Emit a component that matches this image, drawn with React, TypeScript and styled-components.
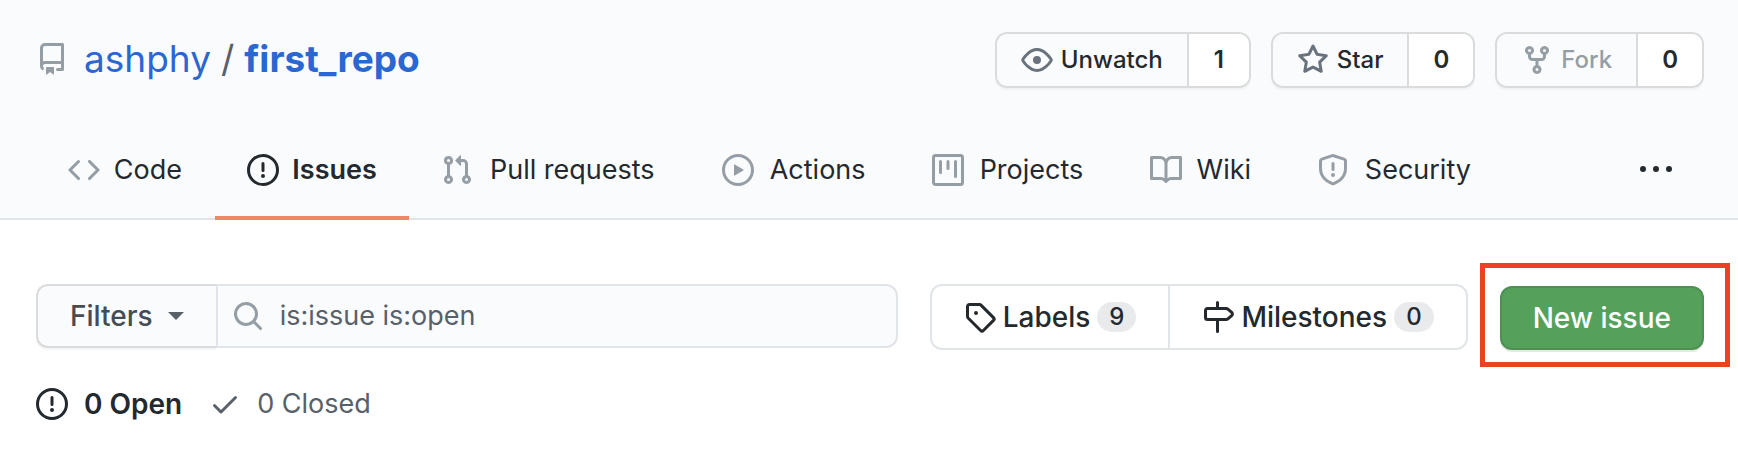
import React from 'react';
import styled, { createGlobalStyle, css } from 'styled-components';

const GlobalStyle = createGlobalStyle`
  *, *::before, *::after { box-sizing: border-box; }
  body {
    margin: 0;
    background: #ffffff;
    color: #24292e;
    font-family: Inter, "Liberation Sans", sans-serif;
    font-size: 27px;
    line-height: 40px;
  }
  a { color: inherit; text-decoration: none; }
  button, input { font: inherit; color: inherit; margin: 0; }
  button { cursor: pointer; }
`;

const icons = {
  repo: 'M2 2.5A2.5 2.5 0 014.5 0h8.75a.75.75 0 01.75.75v12.5a.75.75 0 01-.75.75h-2.5a.75.75 0 110-1.5h1.75v-2h-8a1 1 0 00-.714 1.7.75.75 0 01-1.072 1.05A2.495 2.495 0 012 11.5v-9zm10.5-1V9h-8c-.356 0-.694.074-1 .208V2.5a1 1 0 011-1h8zM5 12.25v3.25a.25.25 0 00.4.2l1.45-1.087a.25.25 0 01.3 0L8.6 15.7a.25.25 0 00.4-.2v-3.25a.25.25 0 00-.25-.25h-3.5a.25.25 0 00-.25.25z',
  code: 'M4.72 3.22a.75.75 0 011.06 1.06L2.06 8l3.72 3.72a.75.75 0 11-1.06 1.06L.47 8.53a.75.75 0 010-1.06l4.25-4.25zm6.56 0a.75.75 0 10-1.06 1.06L13.94 8l-3.72 3.72a.75.75 0 101.06 1.06l4.25-4.25a.75.75 0 000-1.06l-4.25-4.25z',
  issue: 'M8 1.5a6.5 6.5 0 100 13 6.5 6.5 0 000-13zM0 8a8 8 0 1116 0A8 8 0 010 8zm9 3a1 1 0 11-2 0 1 1 0 012 0zm-.25-6.25a.75.75 0 00-1.5 0v3.5a.75.75 0 001.5 0v-3.5z',
  pull: 'M7.177 3.073L9.573.677A.25.25 0 0110 .854v4.792a.25.25 0 01-.427.177L7.177 3.427a.25.25 0 010-.354zM3.75 2.5a.75.75 0 100 1.5.75.75 0 000-1.5zm-2.25.75a2.25 2.25 0 113 2.122v5.256a2.251 2.251 0 11-1.5 0V5.372A2.25 2.25 0 011.5 3.25zM11 2.5h-1V4h1a1 1 0 011 1v5.628a2.251 2.251 0 101.5 0V5A2.5 2.5 0 0011 2.5zm1 10.25a.75.75 0 111.5 0 .75.75 0 01-1.5 0zM3.75 12a.75.75 0 100 1.5.75.75 0 000-1.5z',
  play: 'M1.5 8a6.5 6.5 0 1113 0 6.5 6.5 0 01-13 0zM8 0a8 8 0 100 16A8 8 0 008 0zM6.379 5.227A.25.25 0 006 5.442v5.117a.25.25 0 00.379.214l4.264-2.559a.25.25 0 000-.428L6.379 5.227z',
  project: 'M1.75 0A1.75 1.75 0 000 1.75v12.5C0 15.216.784 16 1.75 16h12.5A1.75 1.75 0 0016 14.25V1.75A1.75 1.75 0 0014.25 0H1.75zM1.5 1.75a.25.25 0 01.25-.25h12.5a.25.25 0 01.25.25v12.5a.25.25 0 01-.25.25H1.75a.25.25 0 01-.25-.25V1.75zM11.75 3a.75.75 0 00-.75.75v7.5a.75.75 0 001.5 0v-7.5a.75.75 0 00-.75-.75zm-8.25.75a.75.75 0 011.5 0v5.5a.75.75 0 01-1.5 0v-5.5zM8 3a.75.75 0 00-.75.75v3.5a.75.75 0 001.5 0v-3.5A.75.75 0 008 3z',
  book: 'M0 1.75A.75.75 0 01.75 1h4.253c1.227 0 2.317.59 3 1.501A3.744 3.744 0 0111.006 1h4.245a.75.75 0 01.75.75v10.5a.75.75 0 01-.75.75h-4.507a2.25 2.25 0 00-1.591.659l-.622.621a.75.75 0 01-1.06 0l-.622-.621A2.25 2.25 0 005.258 13H.75a.75.75 0 01-.75-.75V1.75zm8.755 3a2.25 2.25 0 012.25-2.25H14.5v9h-3.757c-.71 0-1.4.201-1.992.572l.004-7.322zm-1.504 7.324l.004-5.073-.002-2.253A2.25 2.25 0 005.003 2.5H1.5v9h3.757a3.75 3.75 0 011.994.574z',
  shield: 'M7.467.133a1.75 1.75 0 011.066 0l5.25 1.68A1.75 1.75 0 0115 3.48V7c0 1.566-.32 3.182-1.303 4.682-.983 1.498-2.585 2.813-5.032 3.855a1.7 1.7 0 01-1.33 0c-2.447-1.042-4.049-2.357-5.032-3.855C1.32 10.182 1 8.566 1 7V3.48a1.75 1.75 0 011.217-1.667l5.25-1.68zm.61 1.429a.25.25 0 00-.153 0l-5.25 1.68a.25.25 0 00-.174.238V7c0 1.358.275 2.666 1.057 3.86.784 1.194 2.121 2.34 4.366 3.297a.2.2 0 00.154 0c2.245-.956 3.582-2.104 4.366-3.298C13.225 9.666 13.5 8.36 13.5 7V3.48a.25.25 0 00-.174-.237l-5.25-1.68zM9 10.5a1 1 0 11-2 0 1 1 0 012 0zm-.25-5.75a.75.75 0 10-1.5 0v3a.75.75 0 001.5 0v-3z',
  kebab: 'M8 9a1.5 1.5 0 100-3 1.5 1.5 0 000 3zM1.5 9a1.5 1.5 0 100-3 1.5 1.5 0 000 3zm13 0a1.5 1.5 0 100-3 1.5 1.5 0 000 3z',
  eye: 'M1.679 7.932c.412-.621 1.242-1.75 2.366-2.717C5.175 4.242 6.527 3.5 8 3.5c1.473 0 2.824.742 3.955 1.715 1.124.967 1.954 2.096 2.366 2.717a.119.119 0 010 .136c-.412.621-1.242 1.75-2.366 2.717C10.825 11.758 9.473 12.5 8 12.5c-1.473 0-2.824-.742-3.955-1.715C2.92 9.818 2.09 8.69 1.679 8.068a.119.119 0 010-.136zM8 2c-1.981 0-3.67.992-4.933 2.078C1.797 5.169.88 6.423.43 7.1a1.619 1.619 0 000 1.798c.45.678 1.367 1.932 2.637 3.024C4.329 13.008 6.019 14 8 14c1.981 0 3.67-.992 4.933-2.078 1.27-1.091 2.187-2.345 2.637-3.023a1.619 1.619 0 000-1.798c-.45-.678-1.367-1.932-2.637-3.023C11.671 2.992 9.981 2 8 2zm0 8a2 2 0 100-4 2 2 0 000 4z',
  star: 'M8 .25a.75.75 0 01.673.418l1.882 3.815 4.21.612a.75.75 0 01.416 1.279l-3.046 2.97.719 4.192a.75.75 0 01-1.088.791L8 12.347l-3.766 1.98a.75.75 0 01-1.088-.79l.72-4.194L.818 6.374a.75.75 0 01.416-1.28l4.21-.611L7.327.668A.75.75 0 018 .25zm0 2.445L6.615 5.5a.75.75 0 01-.564.41l-3.097.45 2.24 2.184a.75.75 0 01.216.664l-.528 3.084 2.769-1.456a.75.75 0 01.698 0l2.77 1.456-.53-3.084a.75.75 0 01.216-.664l2.24-2.183-3.096-.45a.75.75 0 01-.564-.41L8 2.694v.001z',
  fork: 'M5 3.25a.75.75 0 11-1.5 0 .75.75 0 011.5 0zm0 2.122a2.25 2.25 0 10-1.5 0v.878A2.25 2.25 0 005.75 8.5h1.5v2.128a2.251 2.251 0 101.5 0V8.5h1.5a2.25 2.25 0 002.25-2.25v-.878a2.25 2.25 0 10-1.5 0v.878a.75.75 0 01-.75.75h-4.5A.75.75 0 015 6.25v-.878zm3.75 7.378a.75.75 0 11-1.5 0 .75.75 0 011.5 0zm3-8.75a.75.75 0 100-1.5.75.75 0 000 1.5z',
  tag: 'M2.5 7.775V2.75a.25.25 0 01.25-.25h5.025a.25.25 0 01.177.073l6.25 6.25a.25.25 0 010 .354l-5.025 5.025a.25.25 0 01-.354 0l-6.25-6.25a.25.25 0 01-.073-.177zm-1.5 0V2.75C1 1.784 1.784 1 2.75 1h5.025c.464 0 .91.184 1.238.513l6.25 6.25a1.75 1.75 0 010 2.474l-5.026 5.026a1.75 1.75 0 01-2.474 0l-6.25-6.25A1.75 1.75 0 011 7.775zM6 5a1 1 0 100 2 1 1 0 000-2z',
  milestone: 'M7.75 0a.75.75 0 01.75.75V3h3.634c.414 0 .814.147 1.13.414l2.07 1.75a1.75 1.75 0 010 2.672l-2.07 1.75a1.75 1.75 0 01-1.13.414H8.5v5.25a.75.75 0 11-1.5 0V10H2.75A1.75 1.75 0 011 8.25v-3.5C1 3.784 1.784 3 2.75 3H7V.75A.75.75 0 017.75 0zm0 8.5h4.384a.25.25 0 00.161-.06l2.07-1.75a.25.25 0 000-.38l-2.07-1.75a.25.25 0 00-.161-.06H2.75a.25.25 0 00-.25.25v3.5c0 .138.112.25.25.25h5z',
  search: 'M11.5 7a4.499 4.499 0 11-8.998 0A4.499 4.499 0 0111.5 7zm-.82 4.74a6 6 0 111.06-1.06l3.04 3.04a.75.75 0 11-1.06 1.06l-3.04-3.04z',
  check: 'M13.78 4.22a.75.75 0 010 1.06l-7.25 7.25a.75.75 0 01-1.06 0L2.22 9.28a.75.75 0 011.06-1.06L6 10.94l6.72-6.72a.75.75 0 011.06 0z',
};

type IconName = keyof typeof icons;

const Svg = styled.svg<{ $color: string }>`
  flex: none;
  width: 32px;
  height: 32px;
  fill: ${(p) => p.$color};
`;

const Icon = ({ name, color = 'currentColor' }: { name: IconName; color?: string }) => (
  <Svg viewBox="0 0 16 16" aria-hidden="true" $color={color}>
    <path fillRule="evenodd" d={icons[name]} />
  </Svg>
);

const Header = styled.header`
  padding: 32px 34px 0 36px;
  background: #fafbfd;
  border-bottom: 2px solid #e1e4e8;
`;

const TitleRow = styled.div`
  display: flex;
  justify-content: space-between;
  align-items: flex-start;
  margin-bottom: 36px;
`;

const RepoTitle = styled.h1`
  display: flex;
  align-items: center;
  gap: 10px;
  margin: 0;
  font-size: 37px;
  font-weight: 400;
  line-height: 54px;
  color: #586069;

  svg { margin-right: 6px; }
`;

const RepoLink = styled.a<{ $strong?: boolean }>`
  color: #2b67d2;
  font-weight: ${(p) => (p.$strong ? 700 : 400)};
`;

const RepoActions = styled.div`
  display: flex;
  gap: 20px;
`;

const SplitButton = styled.div`
  display: flex;
  height: 56px;
  border: 2px solid #d9dbdc;
  border-radius: 12px;
  box-shadow: 0 2px 0 rgba(27, 31, 35, 0.04);
  overflow: hidden;
  font-size: 24px;
  line-height: 40px;
`;

const ActionButton = styled.button`
  display: flex;
  align-items: center;
  gap: 8px;
  padding: 0 24px;
  border: 0;
  border-right: 2px solid #d9dbdc;
  background: #fafbfd;
  font-weight: 500;

  &:disabled { color: #959da5; cursor: default; }
`;

const ActionCount = styled.a`
  display: flex;
  align-items: center;
  justify-content: center;
  min-width: 60px;
  padding: 0 24px;
  background: #ffffff;
  font-weight: 600;
`;

const NavRow = styled.nav`
  display: flex;
  justify-content: space-between;
  margin-bottom: -2px;
`;

const TabList = styled.div`
  display: flex;
`;

const Tab = styled.a<{ $active?: boolean }>`
  display: flex;
  align-items: center;
  gap: 13px;
  height: 96px;
  padding: 0 32px;
  border-bottom: 4px solid ${(p) => (p.$active ? '#ee8670' : 'transparent')};
  font-weight: ${(p) => (p.$active ? 600 : 400)};
`;

/* The pseudo-element keeps the bold width reserved so tabs don't shift when selected. */
const TabLabel = styled.span`
  display: flex;
  flex-direction: column;
  align-items: center;

  &::after {
    content: attr(data-content);
    height: 0;
    overflow: hidden;
    visibility: hidden;
    font-weight: 700;
  }
`;

const MoreButton = styled.button`
  display: flex;
  align-items: center;
  height: 92px;
  padding: 0 32px;
  border: 0;
  background: none;
`;

const Main = styled.main`
  padding: 64px 34px 32px 36px;
`;

const Toolbar = styled.div`
  display: flex;
  align-items: flex-start;
  gap: 32px;
`;

const SearchForm = styled.form`
  display: flex;
  flex: 1;
  height: 64px;
`;

const FilterButton = styled.button`
  display: flex;
  align-items: center;
  gap: 15px;
  padding: 0 32px;
  border: 2px solid #d9dbdc;
  border-right: 0;
  border-radius: 12px 0 0 12px;
  background: #fafbfd;
  box-shadow: 0 2px 0 rgba(27, 31, 35, 0.04);
  color: #444d56;
  font-size: 28px;
  font-weight: 500;
`;

const Caret = styled.span`
  border: 8px solid transparent;
  border-top-color: #586069;
  border-bottom: 0;
`;

const SearchField = styled.label`
  display: flex;
  flex: 1;
  align-items: center;
  gap: 16px;
  padding: 0 14px;
  border: 2px solid #e1e4e8;
  border-radius: 0 12px 12px 0;
  background: #fafbfd;
`;

const SearchInput = styled.input`
  flex: 1;
  min-width: 0;
  padding: 0;
  border: 0;
  outline: 0;
  background: none;
  color: #586069;
`;

const LinkGroup = styled.div`
  display: flex;
  height: 66px;
  border: 2px solid #e1e4e8;
  border-radius: 12px;
`;

const GroupLink = styled.a`
  display: flex;
  align-items: center;
  gap: 7px;
  padding: 0 32px;
  font-size: 28px;
  font-weight: 500;

  & + & { border-left: 2px solid #e1e4e8; }
`;

const Counter = styled.span`
  min-width: 38px;
  padding: 0 12px;
  border-radius: 15px;
  background: #e8eaec;
  font-size: 24px;
  line-height: 30px;
  text-align: center;
`;

const Highlight = styled.div`
  position: relative;
  align-self: flex-end;

  &::after {
    content: '';
    position: absolute;
    inset: -23px -26px -17px -20px;
    border: 5px solid #ea4224;
    pointer-events: none;
  }
`;

const PrimaryButton = styled.button`
  height: 64px;
  padding: 0 31px;
  border: 2px solid #4d9052;
  border-radius: 12px;
  background: #55a15b;
  box-shadow: 0 2px 0 rgba(27, 31, 35, 0.1);
  color: #ffffff;
  font-size: 28px;
  font-weight: 500;
`;

const StateRow = styled.div`
  display: flex;
  gap: 27px;
  margin-top: 34px;
`;

const StateLink = styled.a<{ $active?: boolean }>`
  display: flex;
  align-items: center;
  gap: 16px;
  ${(p) =>
    p.$active
      ? css`
          color: #24292e;
          font-size: 28px;
          font-weight: 600;
        `
      : css`
          color: #586069;
        `}
`;

const tabs: { icon: IconName; label: string }[] = [
  { icon: 'code', label: 'Code' },
  { icon: 'issue', label: 'Issues' },
  { icon: 'pull', label: 'Pull requests' },
  { icon: 'play', label: 'Actions' },
  { icon: 'project', label: 'Projects' },
  { icon: 'book', label: 'Wiki' },
  { icon: 'shield', label: 'Security' },
];

const actions: { icon: IconName; label: string; count: number; disabled?: boolean }[] = [
  { icon: 'eye', label: 'Unwatch', count: 1 },
  { icon: 'star', label: 'Star', count: 0 },
  { icon: 'fork', label: 'Fork', count: 0, disabled: true },
];

export default function App() {
  return (
    <>
      <GlobalStyle />
      <Header>
        <TitleRow>
          <RepoTitle>
            <Icon name="repo" color="#959da5" />
            <RepoLink href="#owner">ashphy</RepoLink>
            <span>/</span>
            <RepoLink href="#repo" $strong>first_repo</RepoLink>
          </RepoTitle>
          <RepoActions>
            {actions.map((a) => (
              <SplitButton key={a.label}>
                <ActionButton type="button" disabled={a.disabled}>
                  <Icon name={a.icon} color={a.disabled ? '#959da5' : '#6a737d'} />
                  {a.label}
                </ActionButton>
                <ActionCount href={`#${a.label.toLowerCase()}`}>{a.count}</ActionCount>
              </SplitButton>
            ))}
          </RepoActions>
        </TitleRow>
        <NavRow aria-label="Repository">
          <TabList>
            {tabs.map((t) => {
              const active = t.label === 'Issues';
              return (
                <Tab key={t.label} href={`#${t.icon}`} $active={active} aria-current={active ? 'page' : undefined}>
                  <Icon name={t.icon} color={active ? '#24292e' : '#959da5'} />
                  <TabLabel data-content={t.label}>{t.label}</TabLabel>
                </Tab>
              );
            })}
          </TabList>
          <MoreButton type="button" aria-label="More">
            <Icon name="kebab" />
          </MoreButton>
        </NavRow>
      </Header>
      <Main>
        <Toolbar>
          <SearchForm role="search" onSubmit={(e) => e.preventDefault()}>
            <FilterButton type="button">
              Filters
              <Caret />
            </FilterButton>
            <SearchField>
              <Icon name="search" color="#959da5" />
              <SearchInput type="text" aria-label="Search all issues" defaultValue="is:issue is:open" />
            </SearchField>
          </SearchForm>
          <LinkGroup>
            <GroupLink href="#labels">
              <Icon name="tag" />
              Labels
              <Counter>9</Counter>
            </GroupLink>
            <GroupLink href="#milestones">
              <Icon name="milestone" />
              Milestones
              <Counter>0</Counter>
            </GroupLink>
          </LinkGroup>
          <Highlight>
            <PrimaryButton type="button">New issue</PrimaryButton>
          </Highlight>
        </Toolbar>
        <StateRow>
          <StateLink href="#open" $active>
            <Icon name="issue" />
            0 Open
          </StateLink>
          <StateLink href="#closed">
            <Icon name="check" />
            0 Closed
          </StateLink>
        </StateRow>
      </Main>
    </>
  );
}
